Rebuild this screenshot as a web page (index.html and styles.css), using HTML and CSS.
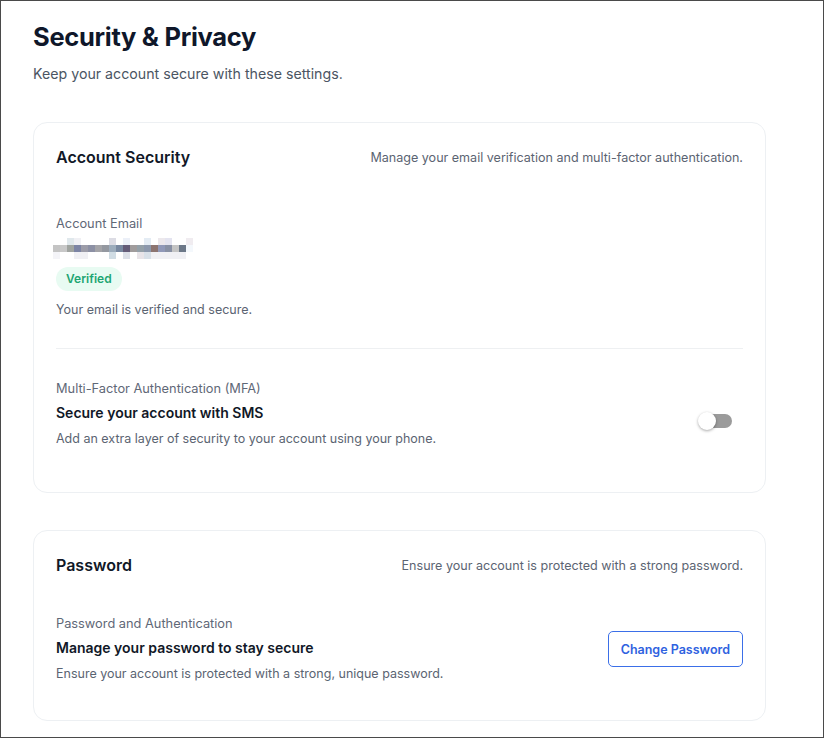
FILE: index.html
```html
<!DOCTYPE html>
<html lang="en">
<head>
    <meta charset="UTF-8">
    <title>Security &amp; Privacy</title>
    <meta name="viewport" content="width=device-width, initial-scale=1">
    <link rel="stylesheet" href="styles.css">
</head>
<body>
<div class="page">
    <h1>Security &amp; Privacy</h1>
    <p class="intro">Keep your account secure with these settings.</p>

    <section class="card card-account">
        <div class="card-head">
            <h2>Account Security</h2>
            <span class="card-note">Manage your email verification and multi-factor authentication.</span>
        </div>

        <div class="block block-email">
            <div class="label">Account Email</div>
            <!-- blurred email -->
            <svg class="email-blur" width="140" height="21" viewBox="0 0 140 21">
                <rect x="14" y="0" width="7" height="7" fill="#e0e8ec"/>
                <rect x="21" y="0" width="7" height="7" fill="#f0f0f4"/>
                <rect x="56" y="0" width="7" height="7" fill="#dcdce4"/>
                <rect x="70" y="0" width="7" height="7" fill="#ecf0f8"/>
                <rect x="91" y="0" width="7" height="7" fill="#e4ecf4"/>
                <rect x="105" y="0" width="7" height="7" fill="#ece8ec"/>
                <rect x="112" y="0" width="7" height="7" fill="#e4e4f0"/>
                <rect x="133" y="0" width="7" height="7" fill="#f0ecf0"/>

                <rect x="0" y="7" width="7" height="7" fill="#c4c4c4"/>
                <rect x="7" y="7" width="7" height="7" fill="#c8c8c8"/>
                <rect x="14" y="7" width="7" height="7" fill="#a0a4a0"/>
                <rect x="21" y="7" width="7" height="7" fill="#7c84a4"/>
                <rect x="28" y="7" width="7" height="7" fill="#9c9ca8"/>
                <rect x="35" y="7" width="7" height="7" fill="#8c90a4"/>
                <rect x="42" y="7" width="7" height="7" fill="#a4a4a8"/>
                <rect x="49" y="7" width="7" height="7" fill="#9498a0"/>
                <rect x="56" y="7" width="7" height="7" fill="#9cacbc"/>
                <rect x="63" y="7" width="7" height="7" fill="#7888a0"/>
                <rect x="70" y="7" width="7" height="7" fill="#645c78"/>
                <rect x="77" y="7" width="7" height="7" fill="#a09c9c"/>
                <rect x="84" y="7" width="7" height="7" fill="#94a0a8"/>
                <rect x="91" y="7" width="7" height="7" fill="#8c98ac"/>
                <rect x="98" y="7" width="7" height="7" fill="#8c7470"/>
                <rect x="105" y="7" width="7" height="7" fill="#9098b8"/>
                <rect x="112" y="7" width="7" height="7" fill="#8890a4"/>
                <rect x="119" y="7" width="7" height="7" fill="#c4c4c4"/>
                <rect x="126" y="7" width="7" height="7" fill="#6c7888"/>
                <rect x="133" y="7" width="7" height="7" fill="#f4f8fc"/>

                <rect x="0" y="14" width="7" height="7" fill="#f4f4f8"/>
                <rect x="21" y="14" width="14" height="7" fill="#f0f0f4"/>
                <rect x="56" y="14" width="7" height="7" fill="#d0dce4"/>
                <rect x="70" y="14" width="7" height="7" fill="#dce0e8"/>
                <rect x="84" y="14" width="7" height="7" fill="#e8e4e8"/>
                <rect x="91" y="14" width="7" height="7" fill="#d8e0e8"/>
                <rect x="98" y="14" width="35" height="7" fill="#f0f0f4"/>
            </svg>
            <span class="badge">Verified</span>
            <p class="desc">Your email is verified and secure.</p>
        </div>

        <div class="block block-mfa">
            <div class="row">
                <div>
                    <div class="label">Multi-Factor Authentication (MFA)</div>
                    <div class="title">Secure your account with SMS</div>
                    <p class="desc">Add an extra layer of security to your account using your phone.</p>
                </div>
                <label class="toggle">
                    <input type="checkbox">
                    <span class="track"></span>
                </label>
            </div>
        </div>
    </section>

    <section class="card card-password">
        <div class="card-head">
            <h2>Password</h2>
            <span class="card-note">Ensure your account is protected with a strong password.</span>
        </div>

        <div class="block block-password">
            <div class="row row-center">
                <div>
                    <div class="label">Password and Authentication</div>
                    <div class="title">Manage your password to stay secure</div>
                    <p class="desc">Ensure your account is protected with a strong, unique password.</p>
                </div>
                <button class="btn-outline">Change Password</button>
            </div>
        </div>
    </section>
</div>
</body>
</html>
```

FILE: styles.css
```css
* {
    box-sizing: border-box;
}
body {
    margin: 0;
    font-family: "Inter", "Noto Sans", sans-serif;
    color: #111827;
    background: #fff;
}
.page {
    height: 738px;
    border: 1px solid #4a4a4a;
    padding: 20px 57px 0 32px;
    overflow: hidden;
}
h1 {
    margin: 0;
    font-size: 25.5px;
    line-height: 32px;
    font-weight: 700;
    color: #0f172a;
    letter-spacing: -0.3px;
}
.intro {
    margin: 10px 0 0;
    font-size: 14.2px;
    line-height: 22px;
    color: #4b5563;
}
.card {
    margin-top: 37px;
    border: 1px solid #edf0f3;
    border-radius: 14px;
    padding: 21px 22px 0;
}
.card-head {
    display: flex;
    justify-content: space-between;
    align-items: center;
    height: 26px;
}
h2 {
    margin: 0;
    font-size: 16px;
    font-weight: 600;
    color: #111827;
}
.card-note {
    font-size: 12.55px;
    color: #5b6472;
}
.label {
    font-size: 12.8px;
    line-height: 20px;
    color: #5f6877;
}
.title {
    margin-top: 3px;
    font-size: 14px;
    line-height: 22px;
    font-weight: 600;
    color: #111827;
}
.desc {
    margin: 5px 0 0;
    font-size: 12.5px;
    line-height: 20px;
    color: #5b6472;
}
.block-email {
    margin-top: 44px;
    padding-bottom: 28px;
    border-bottom: 1px solid #eef0f2;
}
.email-blur {
    display: block;
    margin: 4px 0 0 -3px;
}
.badge {
    display: inline-block;
    margin-top: 8px;
    height: 24px;
    line-height: 24px;
    padding: 0 10px;
    border-radius: 12px;
    background: #e8fbf2;
    color: #1ea672;
    font-size: 12px;
    font-weight: 600;
}
.block-email .desc {
    margin-top: 9px;
}
.block-mfa {
    padding: 30px 0 43px;
}
.block-password {
    margin-top: 36px;
    padding-bottom: 36px;
}
.row {
    display: flex;
    justify-content: space-between;
    align-items: flex-start;
}
.row-center {
    align-items: center;
}
.toggle {
    position: relative;
    margin: 33px 11px 0 0;
    width: 34px;
    height: 18px;
}
.toggle input {
    display: none;
}
.track {
    position: absolute;
    left: 3px;
    right: 0;
    top: 2px;
    height: 14px;
    border-radius: 7px;
    background: #9b9b9b;
}
.track::before {
    content: "";
    position: absolute;
    left: -3px;
    top: -2px;
    width: 18px;
    height: 18px;
    border-radius: 50%;
    background: #fff;
    box-shadow: 0 1px 3px rgba(0,0,0,0.35);
}
.btn-outline {
    font-family: inherit;
    font-size: 12.5px;
    font-weight: 600;
    color: #2f62e0;
    background: #fff;
    border: 1px solid #3b6fe8;
    border-radius: 5px;
    height: 36px;
    padding: 0 12px;
    cursor: pointer;
}
```
